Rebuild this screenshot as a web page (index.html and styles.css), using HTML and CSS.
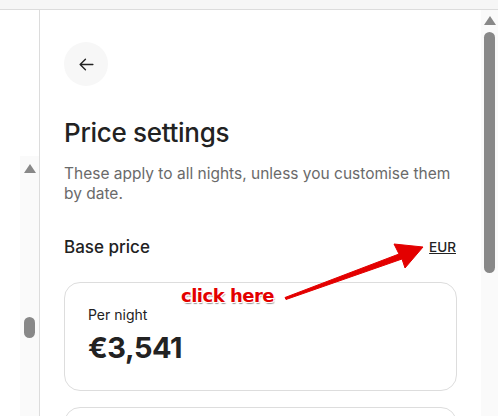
FILE: index.html
```html
<!DOCTYPE html>
<html>
<head>
<meta charset="utf-8">
<link rel="stylesheet" href="styles.css">
</head>
<body>
<div class="topbar"></div>
<div class="frame">
  <aside class="side">
    <div class="side-track">
      <div class="arrow-up"></div>
      <div class="side-thumb"></div>
    </div>
  </aside>
  <main class="main">
    <button class="back" aria-label="Back">
      <svg width="17" height="17" viewBox="0 0 32 32" fill="none" stroke="#222" stroke-width="2.6" stroke-linecap="round" stroke-linejoin="round"><path d="M28 16H4M14 6L4 16l10 10"/></svg>
    </button>
    <h1 class="title">Price settings</h1>
    <p class="sub">These apply to all nights, unless you customise them by date.</p>
    <div class="row">
      <h2 class="label">Base price</h2>
      <a class="cur">EUR</a>
    </div>
    <div class="card">
      <div class="card-label">Per night</div>
      <div class="price">€3,541</div>
    </div>
    <div class="card card-next"></div>
  </main>
  <div class="scroll">
    <div class="arrow-up"></div>
    <div class="thumb"></div>
  </div>
  <div class="note">click here</div>
  <svg class="pointer" width="498" height="416" viewBox="0 0 498 416">
    <path d="M285 297.5 L399 254 L394 244 L423 247 L405 268 L402 259 L286 299.5 Z" fill="#e30000" stroke="#e30000" stroke-width="1" stroke-linejoin="round"/>
  </svg>
</div>
</body>
</html>
```
FILE: styles.css
```css
html, body {
  margin: 0;
  padding: 0;
  background: #fff;
  height: 416px;
  overflow: hidden;
  font-family: Inter, "Noto Sans", sans-serif;
  color: #222;
}
.topbar {
  height: 9px;
  background: #f6f6f6;
  border-bottom: 1px solid #dcdcdc;
}
.frame {
  position: relative;
  display: flex;
  height: 406px;
}
.side {
  width: 39px;
  border-right: 1px solid #dcdcdc;
  display: flex;
  justify-content: flex-end;
  padding-top: 146px;
  box-sizing: content-box;
}
.side-track {
  width: 19px;
  background: #fafafa;
  display: flex;
  flex-direction: column;
  align-items: center;
  padding-top: 8px;
}
.arrow-up {
  width: 0;
  height: 0;
  border-left: 6px solid transparent;
  border-right: 6px solid transparent;
  border-bottom: 9px solid #888;
}
.side-thumb {
  margin-top: 144px;
  width: 11px;
  height: 21px;
  border-radius: 6px;
  background: #888;
}
.main {
  flex: 1;
  padding: 32px 24px 0 24px;
  min-width: 0;
}
.back {
  width: 44px;
  height: 44px;
  border-radius: 50%;
  border: none;
  background: #f7f7f7;
  display: flex;
  align-items: center;
  justify-content: center;
  padding: 0;
}
.title {
  margin: 30px 0 0;
  font-size: 26px;
  line-height: 34px;
  font-weight: 500;
  letter-spacing: -0.3px;
}
.sub {
  margin: 14px 0 0;
  font-size: 15.5px;
  line-height: 20px;
  color: #6a6a6a;
  font-weight: 400;
}
.row {
  margin-top: 31px;
  display: flex;
  justify-content: space-between;
  align-items: center;
}
.label {
  margin: 0;
  font-size: 17px;
  line-height: 24px;
  font-weight: 500;
}
.cur {
  font-size: 13.5px;
  font-weight: 500;
  text-decoration: underline;
  color: #222;
  margin-right: 1px;
}
.card {
  margin-top: 23px;
  border: 1px solid #dddddd;
  border-radius: 16px;
  padding: 23px 23px 26px;
  height: 58px;
}
.card-label {
  font-size: 14px;
  line-height: 18px;
}
.price {
  margin-top: 7px;
  font-size: 29px;
  line-height: 34px;
  font-weight: 700;
  letter-spacing: -0.5px;
}
.card-next {
  margin-top: 16px;
}
.scroll {
  width: 17px;
  background: #fafafa;
  display: flex;
  flex-direction: column;
  align-items: center;
  padding-top: 6px;
}
.thumb {
  margin-top: 7px;
  width: 11px;
  height: 241px;
  border-radius: 6px;
  background: #888;
}
.note {
  position: absolute;
  left: 181px;
  top: 275px;
  font-family: "DejaVu Sans", sans-serif;
  font-weight: 700;
  font-size: 18px;
  color: #e30000;
  text-shadow: -1px -1px 0 #fff, 1px -1px 0 #fff, -1px 1px 0 #fff, 1px 1px 0 #fff, 1px 2px 1px #999;
  letter-spacing: -0.5px;
}
.pointer {
  position: absolute;
  left: 0;
  top: -10px;
  pointer-events: none;
}
```
